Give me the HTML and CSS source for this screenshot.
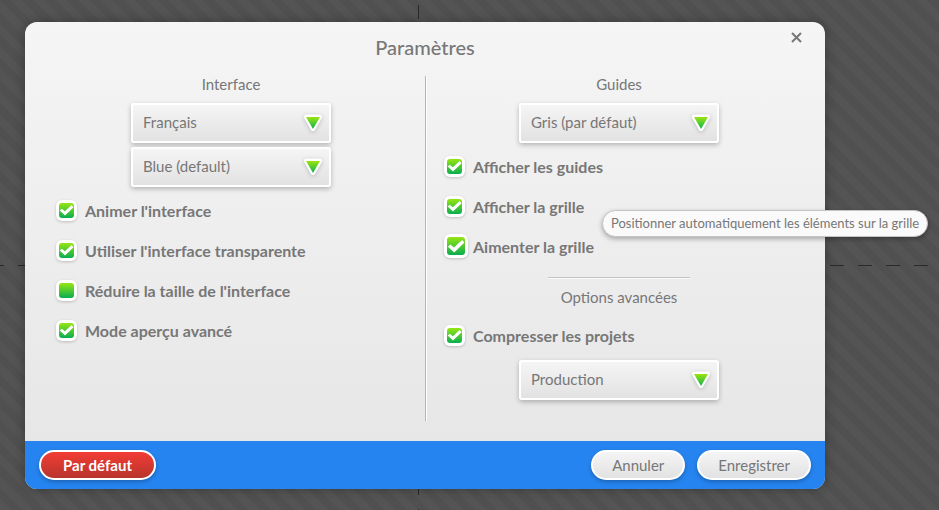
FILE: index.html
```
<!DOCTYPE html>
<html lang="fr">

<head>
    <meta charset="UTF-8">
    <meta name="viewport" content="width=device-width, initial-scale=1.0">
    <title>Paramètres</title>
    <link rel="stylesheet" href="styles.css">
</head>

<body>
    <!-- Shared gradient for the drop-down arrows -->
    <svg class="defs" width="0" height="0" aria-hidden="true">
        <defs>
            <linearGradient id="green" x1="0" y1="0" x2="0" y2="1">
                <stop offset="0" stop-color="#9be60f" />
                <stop offset="1" stop-color="#0ab050" />
            </linearGradient>
            <symbol id="arrow" viewBox="0 0 20 18">
                <path d="M3.500 3h13L10 14.500z" fill="#fff" stroke="#fff" stroke-width="5" stroke-linejoin="round" />
                <path d="M3 3h14L10 15z" fill="url(#green)" />
            </symbol>
        </defs>
    </svg>

    <form class="dialog">
        <header class="dialog-header">
            <h1>Paramètres</h1>
            <button type="button" class="close" aria-label="Fermer">
                <svg width="11" height="11" viewBox="0 0 11 11">
                    <path d="M1 1l9 9M10 1l-9 9" stroke="#777" stroke-width="2" />
                </svg>
            </button>
        </header>

        <div class="columns">
            <section class="column">
                <h2>Interface</h2>
                <div class="select">
                    <select aria-label="Langue">
                        <option>Français</option>
                    </select>
                    <svg class="arrow"><use href="#arrow" /></svg>
                </div>
                <div class="select">
                    <select aria-label="Thème">
                        <option>Blue (default)</option>
                    </select>
                    <svg class="arrow"><use href="#arrow" /></svg>
                </div>
                <label class="option"><input type="checkbox" checked> Animer l'interface</label>
                <label class="option"><input type="checkbox" checked> Utiliser l'interface transparente</label>
                <label class="option"><input type="checkbox"> Réduire la taille de l'interface</label>
                <label class="option"><input type="checkbox" checked> Mode aperçu avancé</label>
            </section>

            <div class="divider"></div>

            <section class="column">
                <h2>Guides</h2>
                <div class="select">
                    <select aria-label="Couleur des guides">
                        <option>Gris (par défaut)</option>
                    </select>
                    <svg class="arrow"><use href="#arrow" /></svg>
                </div>
                <label class="option"><input type="checkbox" checked> Afficher les guides</label>
                <label class="option"><input type="checkbox" checked> Afficher la grille</label>
                <label class="option active">
                    <input type="checkbox" aria-describedby="snap-tip" checked> Aimenter la grille
                    <span class="tooltip" id="snap-tip" role="tooltip">Positionner automatiquement les éléments sur la grille</span>
                </label>

                <hr>
                <h2>Options avancées</h2>
                <label class="option"><input type="checkbox" checked> Compresser les projets</label>
                <div class="select spaced">
                    <select aria-label="Mode de compression">
                        <option>Production</option>
                    </select>
                    <svg class="arrow"><use href="#arrow" /></svg>
                </div>
            </section>
        </div>

        <footer class="dialog-footer">
            <button type="reset" class="btn danger">Par défaut</button>
            <button type="button" class="btn">Annuler</button>
            <button type="submit" class="btn">Enregistrer</button>
        </footer>
    </form>
</body>

</html>
```
FILE: styles.css
```
* {
    margin: 0;
    padding: 0;
    box-sizing: border-box;
}

body {
    min-height: 100vh;
    padding: 22px 114px 21px 25px;
    font-family: Lato, "Open Sans", sans-serif;
    font-size: 15px;
    color: #777;
    /* Dashed guides over the striped canvas */
    background:
        repeating-linear-gradient(90deg, #2a2a2a 0 14px, transparent 14px 28px) -10px 265px / calc(100% + 28px) 1px no-repeat,
        repeating-linear-gradient(180deg, #2a2a2a 0 14px, transparent 14px 28px) 418px 5px / 1px 100% no-repeat,
        repeating-linear-gradient(45deg, #545454 0 8px, #505050 8px 16px);
}

.defs {
    position: absolute;
}

.dialog {
    max-width: 1000px;
    border-radius: 12px;
    background: linear-gradient(#f5f5f5, #e5e5e5);
    box-shadow: 0 0 12px rgba(0, 0, 0, 0.3);
}

.dialog-header {
    position: relative;
    height: 54px;
    padding-top: 13px;
    text-align: center;
}

h1 {
    font-size: 20px;
    font-weight: 500;
    line-height: 24px;
}

.close {
    position: absolute;
    top: 10px;
    right: 23px;
    width: 11px;
    height: 11px;
    border: none;
    background: none;
    cursor: pointer;
}

.close svg {
    display: block;
}

.columns {
    display: grid;
    grid-template-columns: 1fr 2px 1fr;
    padding: 0 12px 20px 14px;
}

.column {
    display: flex;
    flex-direction: column;
    align-items: center;
    min-height: 345px;
}

/* Keep the controls centred clear of the divider */
.column:first-child {
    padding-right: 2px;
}

.column:last-child {
    padding-right: 2px;
}

.divider {
    border-left: 1px solid #b5b5b5;
    background: #fff;
}

h2 {
    padding-bottom: 11px;
    font-size: 15px;
    font-weight: 400;
    line-height: 16px;
}

.select {
    position: relative;
    width: 200px;
    margin-bottom: 4px;
}

.select.spaced {
    margin-top: 4px;
}

select {
    display: block;
    width: 100%;
    height: 40px;
    padding: 0 32px 2px 10px;
    appearance: none;
    border: 2px solid #fff;
    border-radius: 3px;
    background: linear-gradient(#f5f5f5, #e2e2e2);
    box-shadow: 0 2px 5px rgba(0, 0, 0, 0.25);
    font: inherit;
    color: inherit;
}

.arrow {
    position: absolute;
    top: 11px;
    right: 8px;
    width: 20px;
    height: 18px;
    overflow: visible;
    pointer-events: none;
    filter: drop-shadow(0 1px 2px rgba(0, 0, 0, 0.2));
}

.option {
    position: relative;
    display: flex;
    align-items: center;
    align-self: stretch;
    gap: 8px;
    height: 40px;
    padding: 0 0 2px 17px;
    font-size: 16px;
    font-weight: 700;
}

.option input {
    width: 21px;
    height: 21px;
    padding: 3px;
    appearance: none;
    border-radius: 6px;
    background: #fff;
    box-shadow: 0 1px 3px rgba(0, 0, 0, 0.2);
}

.option input::before {
    content: "";
    display: block;
    height: 100%;
    border-radius: 3px;
    background: linear-gradient(#96e612, #08ad50);
}

.option input:checked::after {
    content: "";
    display: block;
    height: 100%;
    margin-top: -100%;
    background: #fff;
    clip-path: polygon(5% 54%, 19% 41%, 39% 58%, 84% 17%, 97% 31%, 40% 86%);
}

.option.active {
    gap: 5px;
}

.option.active input {
    width: 24px;
    height: 24px;
}

.tooltip {
    position: absolute;
    top: -17px;
    left: 175px;
    padding: 0 8px;
    border: 1px solid #c4c4c4;
    border-radius: 14px;
    background: #fafafa;
    box-shadow: 0 2px 5px rgba(0, 0, 0, 0.3);
    font-size: 13px;
    font-weight: 400;
    line-height: 25px;
    white-space: nowrap;
}

hr {
    width: 142px;
    height: 2px;
    margin: 10px 0;
    border: none;
    border-top: 1px solid #c4c4c4;
    background: #fafafa;
}

.dialog-footer {
    display: flex;
    align-items: center;
    gap: 12px;
    height: 48px;
    padding: 0 14px;
    border-radius: 0 0 12px 12px;
    background: #2684f0;
}

.btn {
    height: 30px;
    padding: 0 19px 1px;
    border: 2px solid #fff;
    border-radius: 15px;
    background: linear-gradient(#f5f5f5, #e2e2e2);
    box-shadow: 0 2px 4px rgba(0, 0, 0, 0.25);
    font: inherit;
    color: inherit;
    cursor: pointer;
}

.danger {
    margin-right: auto;
    padding: 0 22px 1px;
    background: linear-gradient(#f23c35, #b8352c);
    font-weight: 700;
    color: #fff;
}
```
